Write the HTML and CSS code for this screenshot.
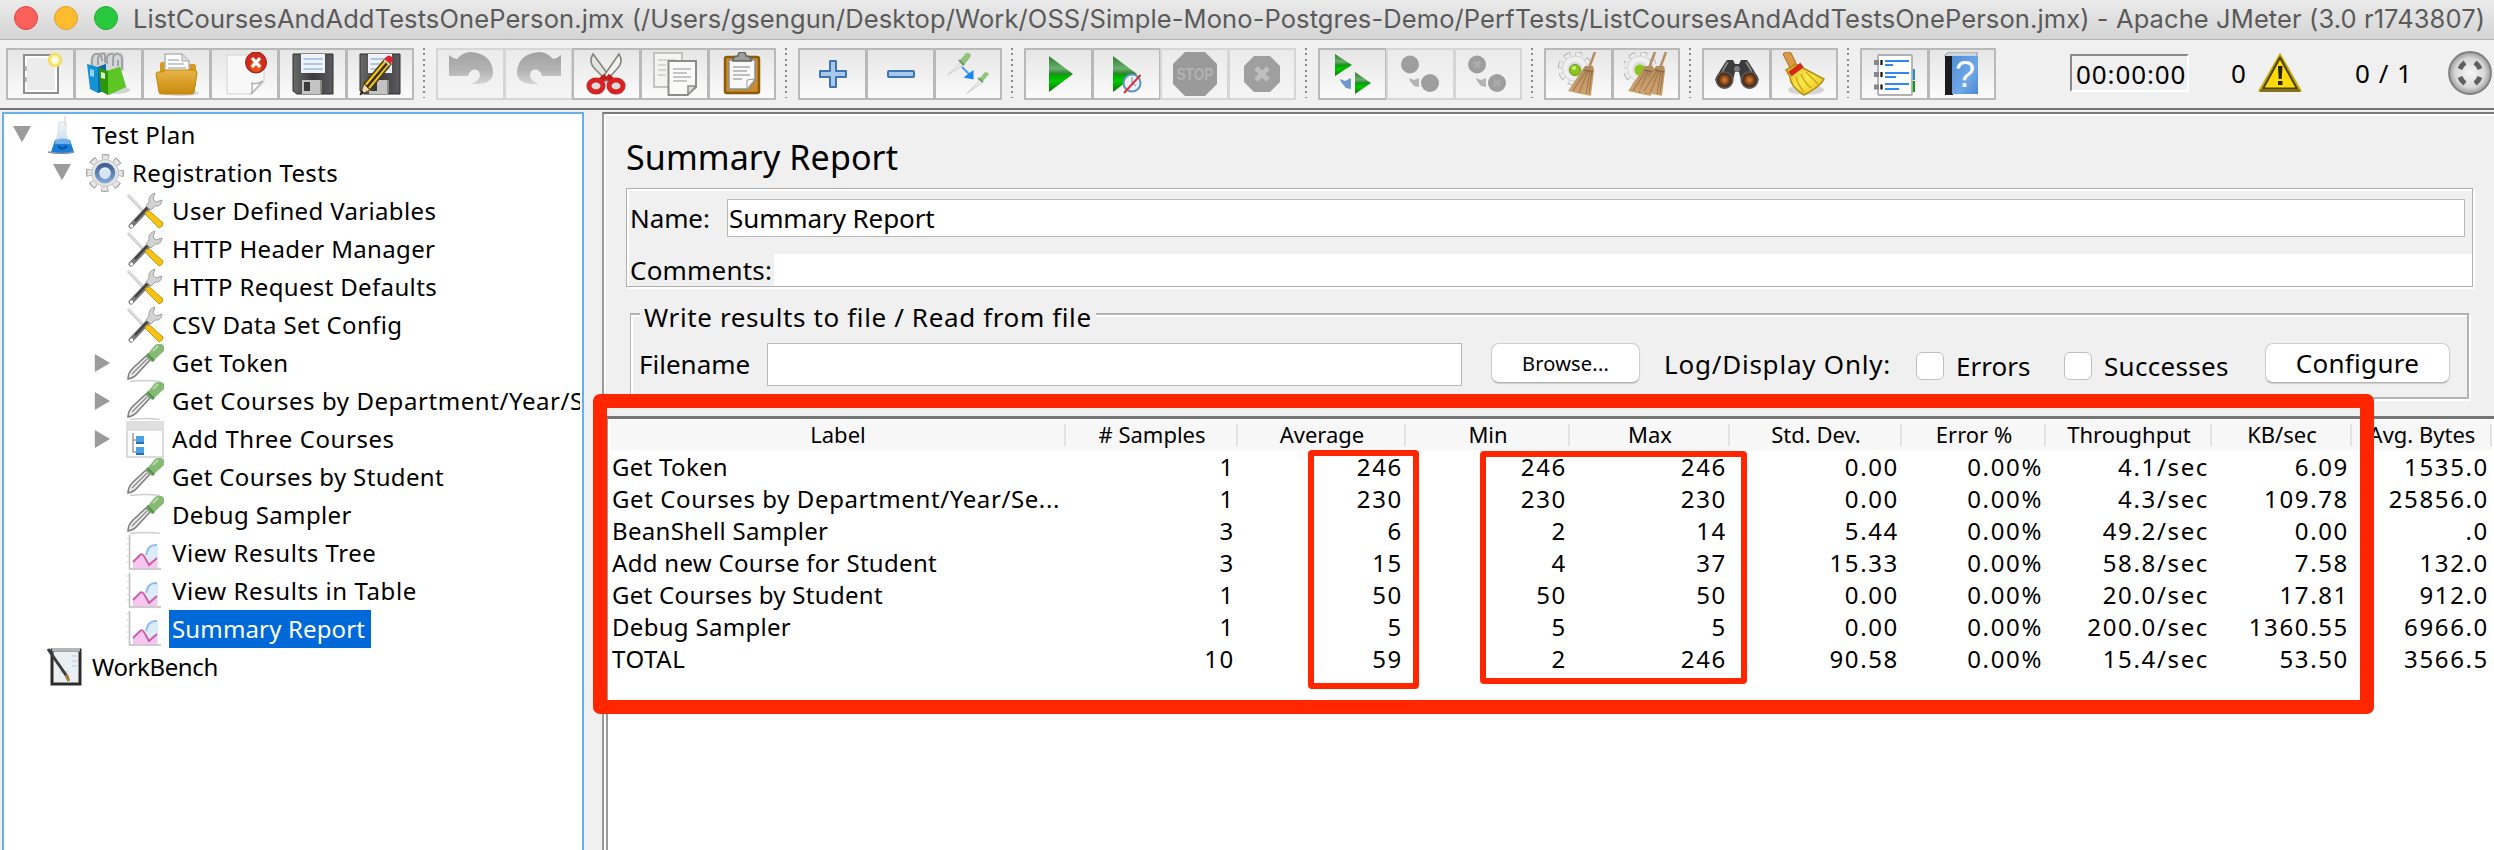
FILE: index.html
```html
<!DOCTYPE html>
<html lang="en">
<head>
<meta charset="utf-8">
<title>Apache JMeter</title>
<link rel="stylesheet" href="styles.css">
</head>
<body>
<svg class="defs" width="0" height="0">
  <defs>
    <linearGradient id="gGreen" x1="0" y1="0" x2="0" y2="1"><stop offset="0" stop-color="#2f7d32"/><stop offset=".35" stop-color="#67b06a"/><stop offset=".5" stop-color="#2f7f2f"/><stop offset=".52" stop-color="#00a800"/><stop offset=".7" stop-color="#00c800"/><stop offset="1" stop-color="#0b6b0b"/></linearGradient>
    <linearGradient id="gFolder" x1="0" y1="0" x2="0" y2="1"><stop offset="0" stop-color="#e8b548"/><stop offset="1" stop-color="#c98a0c"/></linearGradient>
    <linearGradient id="gFloppy" x1="0" y1="0" x2="1" y2="0"><stop offset="0" stop-color="#6a6a6a"/><stop offset=".5" stop-color="#3b3b3d"/><stop offset="1" stop-color="#5c5c60"/></linearGradient>
    <linearGradient id="gUndo" x1="0" y1="0" x2="0" y2="1"><stop offset="0" stop-color="#a2a2a2"/><stop offset=".6" stop-color="#b4b4b4"/><stop offset="1" stop-color="#d6d6d6"/></linearGradient>
    <linearGradient id="gHelp" x1="0" y1="0" x2="1" y2="1"><stop offset="0" stop-color="#4f8fd6"/><stop offset=".6" stop-color="#6fa8e8"/><stop offset="1" stop-color="#4d88cf"/></linearGradient>
    <linearGradient id="gYellow" x1="0" y1="0" x2="1" y2="1"><stop offset="0" stop-color="#d9b320"/><stop offset=".5" stop-color="#fbe94a"/><stop offset="1" stop-color="#e0bb14"/></linearGradient>
    <linearGradient id="gBroom" x1="0" y1="0" x2="0" y2="1"><stop offset="0" stop-color="#b58a5c"/><stop offset="1" stop-color="#d3a774"/></linearGradient>
    <radialGradient id="gBall"><stop offset="0" stop-color="#f6f6f6"/><stop offset=".7" stop-color="#d8d8d8"/><stop offset="1" stop-color="#9a9a9a"/></radialGradient>
    <radialGradient id="gLens"><stop offset="0" stop-color="#d9863a"/><stop offset=".6" stop-color="#7a3c10"/><stop offset="1" stop-color="#1b1b1b"/></radialGradient>
    <linearGradient id="gFlask" x1="0" y1="0" x2="0" y2="1"><stop offset="0" stop-color="#f4f7fa"/><stop offset=".6" stop-color="#cfdff0"/></linearGradient>
    <linearGradient id="gRing" x1="0" y1="0" x2="0" y2="1"><stop offset="0" stop-color="#3f5f93"/><stop offset="1" stop-color="#7fa3d2"/></linearGradient>
  </defs>
  <symbol id="i-new" viewBox="0 0 44 44"><rect x="5" y="3" width="34" height="38" fill="#fff" stroke="#8f8f8b" stroke-width="2"/><rect x="8" y="6" width="28" height="32" fill="#ececec"/><path d="M7 14v5M7 25v5" stroke="#bbb" stroke-width="2"/><circle cx="36" cy="8" r="6" fill="#faf3b4" stroke="#f0df63" stroke-width="2.5"/><circle cx="36" cy="8" r="2.5" fill="#fff"/></symbol>
  <symbol id="i-templates" viewBox="0 0 44 44"><ellipse cx="28" cy="38" rx="15" ry="4" fill="#000" opacity=".15"/><path d="M3 13V7Q5 0 12 0h22q3 2 3 6v13H4z" fill="#d3d5d6"/><path d="M5 14V7q1-6 6-5q4 1 4 7M11 13V6q2-6 7-4v9M20 12V6q1-5 6-4M26 14V6q1-5 5-4 4 1 4 5v11M31 14V8" fill="none" stroke="#9b9ea0" stroke-width="1.8"/><path d="M0 12l11 3 8-3v26l-8 3-8-4z" fill="#1592d4"/><path d="M11 15l8-3v26l-8 3z" fill="#0b6ba8"/><path d="M3 17l4 1v7l-4-1z" fill="#8fd3f5"/><path d="M12 16l8 3 13-4 6 20-18 8-7-4z" fill="#56bd1e"/><path d="M12 16l9 3v24l-7-4z" fill="#2c9608"/><path d="M21 19l12-4 6 20-18 8z" fill="#5cc724"/><path d="M14 20l4 1v6l-4-1z" fill="#d9f6c8"/></symbol>
  <symbol id="i-open" viewBox="0 0 44 44"><ellipse cx="26" cy="41" rx="18" ry="3" fill="#000" opacity=".15"/><path d="M5 12q0-2 2-2h5v10h22v-8h5q2 0 2 2v20H5z" fill="#d89a1c"/><path d="M10 2h17l7 7v18H10z" fill="#fdfdfd" stroke="#b5b5b5" stroke-width="1.5"/><path d="M27 2v7h7" fill="#ddd" stroke="#aaa"/><path d="M13 8h11M13 12h16M13 16h18" stroke="#b4bbc2" stroke-width="1.6"/><path d="M1 22q0-2 2-2h5l2-2h29q3 0 3 3l-3 19q0 2-3 2H7q-3 0-3-2z" fill="url(#gFolder)" stroke="#bd850f"/></symbol>
  <symbol id="i-close" viewBox="0 0 44 44"><path d="M4 3h37v27L29 42H4z" fill="#f8f8f8" stroke="#d2d2d2"/><path d="M40 29q-7 4-11 2 1 6-1 11z" fill="#fff" stroke="#b5b5b5" stroke-width="1.5"/><circle cx="33" cy="10.500" r="10.500" fill="#cf2a1c" stroke="#9c1a10"/><circle cx="33" cy="14" r="6" fill="#f0801c" opacity=".5"/><path d="M29 6l8 9M37 6l-8 9" stroke="#fff" stroke-width="3.2"/></symbol>
  <symbol id="i-save" viewBox="0 0 44 44"><path d="M2 2h40v40H6l-4-3z" fill="url(#gFloppy)" stroke="#2d2d2f"/><rect x="10" y="2" width="24" height="19" fill="#eef3fa"/><path d="M12.500 7h19M12.500 12h19M12.500 17h19" stroke="#9db9d9" stroke-width="1.6"/><rect x="11" y="28" width="19" height="14" fill="#c3c3c3"/><rect x="13" y="30" width="6" height="9" fill="#3a3a3a"/><path d="M30 28v13" stroke="#888" stroke-width="2"/></symbol>
  <symbol id="i-pencil" viewBox="0 0 44 44"><path d="M6 32L27 7l6 5L12 38z" fill="#f3c524" stroke="#4a3a08" stroke-width="1.5"/><path d="M9 35L30 10" stroke="#38300c" stroke-width="2.500"/><path d="M26 8l2-3q3-3 6 0 2 3 0 5l-3 3z" fill="#d8262d"/><path d="M26 8l6 5" stroke="#c9c9c9" stroke-width="2"/><path d="M6 32l6 6-10 5z" fill="#f0d9ac" stroke="#5b4a20"/><path d="M2 43l2-5 2 3z" fill="#222"/></symbol>
  <symbol id="i-undo" viewBox="0 0 44 44"><path d="M0 3q3 3 8 4Q14 0 22 0 43 2 44 20 44 31 30 32l-8 0q8-3 9-8 0-8-8-6-3 2-4 6H0z" fill="url(#gUndo)"/></symbol>
  <symbol id="i-cut" viewBox="0 0 44 44"><path d="M8 2q-5 8 2 15l12 12 3-4z" fill="#e4e4e0" stroke="#85857f" stroke-width="1.6"/><path d="M34 2q5 8-2 15L21 29l-3-4z" fill="#f0f0ec" stroke="#85857f" stroke-width="1.6"/><path d="M21 24l-7 6M22 24l7 6" stroke="#c41c1c" stroke-width="6"/><ellipse cx="11" cy="34" rx="7" ry="6" fill="#ddd" stroke="#d62424" stroke-width="5"/><ellipse cx="31" cy="34" rx="7" ry="6" fill="#ddd" stroke="#d62424" stroke-width="5"/></symbol>
  <symbol id="i-copy" viewBox="0 0 44 44"><rect x="1" y="1" width="28" height="34" fill="#f3f3f2" stroke="#c3c3c0" stroke-width="2"/><path d="M5 8h18M5 13h8M5 18h8M5 23h8" stroke="#d5d5d5" stroke-width="2"/><path d="M15.500 9H43v26l-9 8H15.500z" fill="#fafafa" stroke="#8c8c88" stroke-width="2"/><path d="M20 17h18M20 21h14M20 25h18M20 29h14" stroke="#c6c6c4" stroke-width="1.8"/><path d="M43 34h-8v9z" fill="#ddd" stroke="#8c8c88" stroke-width="1.500"/></symbol>
  <symbol id="i-paste" viewBox="0 0 44 44"><rect x="5" y="5" width="34" height="36" rx="2" fill="#c98b2c" stroke="#8c5a0a" stroke-width="2.500"/><path d="M9 8h26v20l-7 9H9z" fill="#f8f8f8" stroke="#8f8f8b" stroke-width="1.500"/><path d="M35 27l-8 1v9z" fill="#fff" stroke="#999"/><path d="M13 15h17M13 19h14M13 23h17M13 27h9" stroke="#bdbdbb" stroke-width="1.800"/><path d="M13 9q0-5 5-5 0-4 4-4t4 4q5 0 5 5z" fill="#9d9f9a" stroke="#62645f" stroke-width="1.500"/></symbol>
  <symbol id="i-plus" viewBox="0 0 44 44"><path d="M19 9h6v10h10v6H25v10h-6V25H9v-6h10z" fill="#a9c9ea" stroke="#3f74b3" stroke-width="2" stroke-linejoin="round"/></symbol>
  <symbol id="i-minus" viewBox="0 0 44 44"><rect x="9" y="19" width="26" height="6" fill="#a9c9ea" stroke="#3f74b3" stroke-width="2" rx="1"/></symbol>
  <symbol id="i-toggle" viewBox="0 0 44 44"><path d="M1.500 23L14 11l2.500 2.500z" fill="#ececec" stroke="#cfcfcf"/><path d="M14 8l6-7q4-1 5 3l-6 8-2 2z" fill="#93c47e"/><path d="M13 8l5 5" stroke="#6a9c60" stroke-width="2"/><path d="M20 42L34 28l2.500 2.500z" fill="#ececec" stroke="#cfcfcf"/><path d="M33 27l6-7q3 0 4 2l-6 7z" fill="#93c47e"/><path d="M32 26l5 4" stroke="#6a9c60" stroke-width="1.800"/><path d="M16 15l8 8" stroke="#4d9ff2" stroke-width="2.200"/><path d="M27.500 18v9.500l-10-2z" fill="#1d86f5"/></symbol>
  <symbol id="i-play" viewBox="0 0 44 44"><path d="M12 4l24 18-24 18z" fill="url(#gGreen)"/></symbol>
  <symbol id="i-playnt" viewBox="0 0 44 44"><path d="M8 4l24 18L8 40z" fill="url(#gGreen)"/><circle cx="27" cy="31" r="8.500" fill="#eaf1f8" stroke="#5c93c8" stroke-width="2"/><path d="M27 25v6l4 3" fill="none" stroke="#8fb0d0" stroke-width="1.500"/><path d="M35.500 23L19 41" stroke="#e03030" stroke-width="2"/></symbol>
  <symbol id="i-stop" viewBox="0 0 44 44"><path d="M12 0h20l12 12v20L32 44H12L0 32V12z" fill="#9a9a9a"/></symbol>
  <symbol id="i-shutdown" viewBox="0 0 44 44"><path d="M14 4h16l10 10v16L30 40H14L4 30V14z" fill="#9f9f9f"/><path d="M16 16l12 12M28 16L16 28" stroke="#bfbfbf" stroke-width="5"/></symbol>
  <symbol id="i-rstart" viewBox="0 0 44 44"><path d="M4 2l17 11L4 24z" fill="url(#gGreen)"/><path d="M24 20l16 11-16 11z" fill="url(#gGreen)"/><path d="M20 26v11l-5-1-5-6-1-3 5 2z" fill="#6c9acd"/></symbol>
  <symbol id="i-rstop" viewBox="0 0 44 44"><circle cx="11" cy="12.500" r="9" fill="#9e9e9e"/><circle cx="31" cy="31" r="9" fill="#9e9e9e"/><path d="M20 26v9l-5-1-4-5-1-3 5 2z" fill="#b4b4b4"/></symbol>
  <symbol id="i-rshut" viewBox="0 0 44 44"><use href="#i-rstop"/><path d="M8 9.500l6 6M14 9.500l-6 6M28 28l6 6M34 28l-6 6" stroke="#adadad" stroke-width="2.500"/></symbol>
  <symbol id="i-cog" viewBox="0 0 44 44"><circle cx="18" cy="16.500" r="14.500" fill="none" stroke="#b4b4b4" stroke-width="5.500" stroke-dasharray="6.500 4.890"/><circle cx="18" cy="16.500" r="14" fill="none" stroke="#ececec" stroke-width="4.500" stroke-dasharray="5.300 5.700" stroke-dashoffset="-.6"/><circle cx="18" cy="16.500" r="12.500" fill="#efefef" stroke="#d2d2d2"/><circle cx="18" cy="17" r="7.500" fill="#dcdcdc"/></symbol>
  <symbol id="i-brush" viewBox="0 0 44 44"><path d="M38 0l-6 16" stroke="#b58f66" stroke-width="2.600"/><path d="M28 14h8l1 4-3 26-10-2-13-3z" fill="url(#gBroom)"/><path d="M29 19L16 39M31 19l-9 22M33 19l-4 23M35 19l-3 23" stroke="#9c7444" stroke-width="1"/><path d="M27 18l9 2" stroke="#8a6a44" stroke-width="1.500"/></symbol>
  <symbol id="i-clear" viewBox="0 0 44 44"><use href="#i-cog"/><circle cx="18" cy="18" r="5.500" fill="#8cc51c" stroke="#6d9c14"/><circle cx="17" cy="16" r="2" fill="#cdf07a"/><use href="#i-brush"/></symbol>
  <symbol id="i-clearall" viewBox="0 0 44 44"><use href="#i-cog" x="-2"/><circle cx="16" cy="18" r="5.500" fill="#8cc51c"/><use href="#i-brush" x="-7"/><use href="#i-brush" x="4"/></symbol>
  <symbol id="i-find" viewBox="0 0 44 44"><path d="M12 8h6l2 4h4l2-4h6q6 8 12 20l-9 6-9-6-2-8h-4l-2 8-8 6-10-6Q6 16 12 8z" fill="#3a3c3c"/><path d="M13 10q-5 7-7 13M31 10q5 7 7 13" stroke="#85898a" stroke-width="2" fill="none"/><circle cx="9.500" cy="28" r="8" fill="url(#gLens)" stroke="#555" stroke-width="2"/><circle cx="34.500" cy="28" r="8" fill="url(#gLens)" stroke="#555" stroke-width="2"/><circle cx="22" cy="17" r="3" fill="#7b7e7e"/></symbol>
  <symbol id="i-broom" viewBox="0 0 44 44"><ellipse cx="24" cy="38" rx="18" ry="5" fill="#000" opacity=".14"/><path d="M1 2q4-4 8-1l5 10-6 5z" fill="#d99a45" stroke="#a86c1c"/><path d="M4 18l10-6 7 4 21 11q-3 7-20 16Q8 34 8 25z" fill="url(#gYellow)" stroke="#b08c10" stroke-width="1.500"/><path d="M14 25q2 8 8 15M19 22q3 8 10 14M24 20l12 12" fill="none" stroke="#c9a21a" stroke-width="1.300"/><path d="M8 22L20 13" stroke="#d3261c" stroke-width="5.500"/></symbol>
  <symbol id="i-list" viewBox="0 0 44 44"><rect x="36" y="17" width="6" height="11" fill="#2f86dc"/><rect x="36" y="29" width="6" height="11" fill="#159415"/><rect x="5" y="3" width="34" height="40" rx="1" fill="#fff" stroke="#b0b0b0" stroke-width="1.800"/><path d="M12 9h24M12 13h8M12 21h24M12 25h11M12 32h24M12 37h14" stroke="#2f8af0" stroke-width="2"/><path d="M1 10.500h5M1 22.500h5M1 35h5" stroke="#888" stroke-width="5"/><path d="M8.500 8v5M8.500 20v5M8.500 32.500v5" stroke="#111" stroke-width="2.200"/></symbol>
  <symbol id="i-help" viewBox="0 0 44 44"><path d="M5 3l4-3h28v5H5z" fill="#ccd5dc" stroke="#8d979e"/><rect x="5" y="4" width="8" height="39" fill="#1c1c1e"/><rect x="12" y="4" width="26" height="38" fill="url(#gHelp)"/></symbol>
  <symbol id="i-warn" viewBox="0 0 44 44"><path d="M22 3L43 40H1z" fill="#f6d500" stroke="#c7a600" stroke-width="1.500" stroke-linejoin="round"/><path d="M22 6.500L39 37.500H5z" fill="#fbda05" stroke="#4d430c" stroke-width="2.200" stroke-linejoin="round"/><path d="M2 39.500h40" stroke="#857016" stroke-width="3"/><path d="M20 15h4.500l-.8 13h-3z" fill="#222"/><rect x="20" y="30" width="4.500" height="4" fill="#222"/></symbol>
  <symbol id="i-ball" viewBox="0 0 44 44"><circle cx="22" cy="22" r="21" fill="url(#gBall)" stroke="#7f7f7f" stroke-width="1.800"/><path d="M12 18q1.500-4 5-6.500M27 11.500q3.500 2.500 5 6.500M32 26q-1.500 4-5 6.500M17 32.500q-3.500-2.500-5-6.500" fill="none" stroke="#5f5f5f" stroke-width="5"/></symbol>
  <symbol id="t-flask" viewBox="0 0 38 38"><path d="M13 6h7v12l7 18H6l6-18z" fill="url(#gFlask)" stroke="#d8dde2"/><path d="M19 0v10" stroke="#dedede" stroke-width="1.500"/><path d="M9 24h15l4 12q-11 3-23 0z" fill="#1c7fd6"/><path d="M9.500 24q7-3 14 0l1 4H9z" fill="#6fb0e8"/><path d="M12 30q4 5 9 0" stroke="#0d56a8" stroke-width="2.500" fill="none"/><path d="M2 36q14 3 26 0" stroke="#7f95ab" stroke-width="1.500" fill="none"/></symbol>
  <symbol id="t-gear" viewBox="0 0 38 38"><circle cx="19" cy="19" r="16" fill="none" stroke="#a2a2a2" stroke-width="6" stroke-dasharray="7 5.566" stroke-dashoffset="3.500"/><circle cx="19" cy="19" r="15.500" fill="none" stroke="#e6e6e6" stroke-width="4.600" stroke-dasharray="5.400 6.774" stroke-dashoffset="2.700"/><circle cx="19" cy="19" r="13.500" fill="#e3e3e3" stroke="#c6c6c6"/><circle cx="19" cy="19" r="8" fill="#edf4fc" stroke="url(#gRing)" stroke-width="4.500"/><circle cx="19" cy="20" r="5" fill="#d5e4f6"/></symbol>
  <symbol id="t-tools" viewBox="0 0 38 38"><path d="M2 3l16 17" stroke="#c9c9c9" stroke-width="3"/><path d="M2 2.500l16 17" stroke="#f2f2f2" stroke-width="1"/><path d="M5 34L24 14" stroke="#7a7a7a" stroke-width="5" stroke-linecap="round"/><path d="M9 29L22 15" stroke="#3e3e3e" stroke-width="2"/><circle cx="5.500" cy="34" r="1.700" fill="#fff"/><path d="M29 1q-7 2-6 9l-3 4 5 4 4-4q6 1 7-6l-6 2-3-3z" fill="#d3d3d3" stroke="#a2a2a2"/><path d="M19.500 20l4-1L37 31q0 4-4 5L20 23z" fill="#f6c514" stroke="#c9960c"/></symbol>
  <symbol id="t-dropper" viewBox="0 0 38 38"><path d="M4 37.500q16-2 30 0" stroke="#cfcfcf" fill="none" stroke-width="1.500"/><path d="M2 35q0-6 5-11L20 12l4 4L12 29Q8 34 2 35z" fill="#e8e8e8" stroke="#7c7c7c" stroke-width="1.500"/><path d="M6 30L21 15" stroke="#8d8d8d" stroke-width="1.300"/><path d="M20 12l9-11q6-3 9 1v5l-12 11z" fill="#86ba74"/><path d="M21 10l7 7" stroke="#5a954f" stroke-width="2.500"/><path d="M27 7l5-5" stroke="#b7dba8" stroke-width="2"/></symbol>
  <symbol id="t-ctrl" viewBox="0 0 38 38"><rect x="1" y="2" width="36" height="35" fill="#fff" stroke="#dcdcdc" stroke-width="2"/><rect x="0" y="1" width="38" height="10" fill="#dfdfdf"/><path d="M7 13v19h4M7 20h4" stroke="#9c9c9c" stroke-width="1.500" fill="none"/><rect x="10" y="16" width="8" height="8" fill="#4ba0e6"/><rect x="10" y="27" width="8" height="8" fill="#4ba0e6"/><path d="M10 23h8M10 34h8" stroke="#1b5f9e" stroke-width="1.500"/></symbol>
  <symbol id="t-chart" viewBox="0 0 38 38"><path d="M3.500 1v34H35" stroke="#bdbdbd" stroke-width="1.500" fill="none"/><path d="M0 4h3M0 10h3M0 16h3M0 22h3M0 28h3" stroke="#ddd"/><path d="M32 34V11q-8-1-12 9v14z" fill="#dcecfb"/><path d="M31 11q-9-1-11 10" stroke="#8cbdf0" stroke-width="2" fill="none"/><path d="M7 34V28l7-7q2-2 4 1l5 7 8-6v11z" fill="#f6c6ee"/><path d="M7 28l7-7q2-2 4 1l5 9 8-7" stroke="#cc5c9e" stroke-width="1.800" fill="none"/></symbol>
  <symbol id="t-bench" viewBox="0 0 38 38"><rect x="6" y="2" width="28" height="34" fill="#eceff2" stroke="#2c2c2c" stroke-width="3"/><path d="M6 1.500h28" stroke="#b5b5b5" stroke-width="4"/><path d="M26 8h5M26 13h5M26 18h5M14 24h8" stroke="#cddae8" stroke-width="2"/><path d="M2 1l20 29" stroke="#3c3c3c" stroke-width="3"/><path d="M20 27l3 6" stroke="#a67c35" stroke-width="3"/></symbol>
</svg>

<div class="window">
  <header class="titlebar">
    <span class="light light-red"></span><span class="light light-yellow"></span><span class="light light-green"></span>
    <h1 class="window-title">ListCoursesAndAddTestsOnePerson.jmx (/Users/gsengun/Desktop/Work/OSS/Simple-Mono-Postgres-Demo/PerfTests/ListCoursesAndAddTestsOnePerson.jmx) - Apache JMeter (3.0 r1743807)</h1>
  </header>

  <nav class="toolbar">
    <div class="group">
      <button class="tool"><svg><use href="#i-new"/></svg></button>
      <button class="tool"><svg><use href="#i-templates"/></svg></button>
      <button class="tool"><svg><use href="#i-open"/></svg></button>
      <button class="tool"><svg><use href="#i-close"/></svg></button>
      <button class="tool"><svg><use href="#i-save"/></svg></button>
      <button class="tool"><svg><use href="#i-save"/><use href="#i-pencil"/></svg></button>
    </div>
    <span class="sep"></span>
    <div class="group">
      <button class="tool off"><svg><use href="#i-undo"/></svg></button>
      <button class="tool off"><svg class="mirror"><use href="#i-undo"/></svg></button>
      <button class="tool"><svg><use href="#i-cut"/></svg></button>
      <button class="tool"><svg><use href="#i-copy"/></svg></button>
      <button class="tool"><svg><use href="#i-paste"/></svg></button>
    </div>
    <span class="sep"></span>
    <div class="group">
      <button class="tool"><svg><use href="#i-plus"/></svg></button>
      <button class="tool"><svg><use href="#i-minus"/></svg></button>
      <button class="tool"><svg><use href="#i-toggle"/></svg></button>
    </div>
    <span class="sep"></span>
    <div class="group">
      <button class="tool"><svg><use href="#i-play"/></svg></button>
      <button class="tool"><svg><use href="#i-playnt"/></svg></button>
      <button class="tool off"><svg viewBox="0 0 44 44"><use href="#i-stop"/><text class="stop-text" x="3.500" y="28" textLength="37" lengthAdjust="spacingAndGlyphs">STOP</text></svg></button>
      <button class="tool off"><svg><use href="#i-shutdown"/></svg></button>
    </div>
    <span class="sep"></span>
    <div class="group">
      <button class="tool"><svg><use href="#i-rstart"/></svg></button>
      <button class="tool off"><svg><use href="#i-rstop"/></svg></button>
      <button class="tool off"><svg><use href="#i-rshut"/></svg></button>
    </div>
    <span class="sep"></span>
    <div class="group">
      <button class="tool"><svg><use href="#i-clear"/></svg></button>
      <button class="tool"><svg><use href="#i-clearall"/></svg></button>
    </div>
    <span class="sep"></span>
    <div class="group">
      <button class="tool"><svg><use href="#i-find"/></svg></button>
      <button class="tool"><svg><use href="#i-broom"/></svg></button>
    </div>
    <span class="sep"></span>
    <div class="group">
      <button class="tool"><svg><use href="#i-list"/></svg></button>
      <button class="tool"><svg viewBox="0 0 44 44"><use href="#i-help"/><text class="help-text" x="25" y="35" text-anchor="middle">?</text></svg></button>
    </div>
    <div class="status">
      <span class="timer">00:00:00</span>
      <span class="errors">0</span>
      <svg class="status-icon"><use href="#i-warn"/></svg>
      <span class="threads">0 / 1</span>
      <svg class="status-icon"><use href="#i-ball"/></svg>
    </div>
  </nav>

  <main class="main">
    <ul class="tree">
      <li class="node d0"><i class="arrow open"></i><svg><use href="#t-flask"/></svg><span>Test Plan</span></li>
      <li class="node d1"><i class="arrow open"></i><svg><use href="#t-gear"/></svg><span>Registration Tests</span></li>
      <li class="node d2"><i class="arrow"></i><svg><use href="#t-tools"/></svg><span>User Defined Variables</span></li>
      <li class="node d2"><i class="arrow"></i><svg><use href="#t-tools"/></svg><span>HTTP Header Manager</span></li>
      <li class="node d2"><i class="arrow"></i><svg><use href="#t-tools"/></svg><span>HTTP Request Defaults</span></li>
      <li class="node d2"><i class="arrow"></i><svg><use href="#t-tools"/></svg><span>CSV Data Set Config</span></li>
      <li class="node d2"><i class="arrow shut"></i><svg><use href="#t-dropper"/></svg><span>Get Token</span></li>
      <li class="node d2"><i class="arrow shut"></i><svg><use href="#t-dropper"/></svg><span class="long">Get Courses by Department/Year/S</span></li>
      <li class="node d2"><i class="arrow shut"></i><svg><use href="#t-ctrl"/></svg><span class="long">Add Three Courses</span></li>
      <li class="node d2"><i class="arrow"></i><svg><use href="#t-dropper"/></svg><span>Get Courses by Student</span></li>
      <li class="node d2"><i class="arrow"></i><svg><use href="#t-dropper"/></svg><span>Debug Sampler</span></li>
      <li class="node d2"><i class="arrow"></i><svg><use href="#t-chart"/></svg><span class="long">View Results Tree</span></li>
      <li class="node d2"><i class="arrow"></i><svg><use href="#t-chart"/></svg><span class="long">View Results in Table</span></li>
      <li class="node d2"><i class="arrow"></i><svg><use href="#t-chart"/></svg><span class="selected">Summary Report</span></li>
      <li class="node d0"><i class="arrow"></i><svg><use href="#t-bench"/></svg><span class="tight">WorkBench</span></li>
    </ul>

    <section class="panel">
      <h2 class="panel-title">Summary Report</h2>
      <div class="ident">
        <div class="row-name"><label>Name:</label><div class="field">Summary Report</div></div>
        <div class="row-comments"><label>Comments:</label><div class="field-flat"></div></div>
      </div>
      <div class="file-box">
        <span class="legend">Write results to file / Read from file</span>
        <div class="file-row">
          <label class="filename">Filename</label>
          <div class="file-input"></div>
          <button class="btn browse">Browse...</button>
          <span class="log-only">Log/Display Only:</span>
          <i class="check"></i><span class="check-label errors-label">Errors</span>
          <i class="check"></i><span class="check-label success-label">Successes</span>
          <button class="btn configure">Configure</button>
        </div>
      </div>
      <div class="table-wrap">
        <table class="report">
          <colgroup><col class="c-label"><col class="c-samples"><col class="c-avg"><col class="c-min"><col class="c-max"><col class="c-dev"><col class="c-err"><col class="c-thr"><col class="c-kb"><col class="c-bytes"></colgroup>
          <thead><tr><th>Label</th><th># Samples</th><th>Average</th><th>Min</th><th>Max</th><th>Std. Dev.</th><th>Error %</th><th>Throughput</th><th>KB/sec</th><th>Avg. Bytes</th></tr></thead>
          <tbody>
            <tr><td>Get Token</td><td>1</td><td>246</td><td>246</td><td>246</td><td>0.00</td><td>0.00%</td><td>4.1/sec</td><td>6.09</td><td>1535.0</td></tr>
            <tr><td class="wide">Get Courses by Department/Year/Se...</td><td>1</td><td>230</td><td>230</td><td>230</td><td>0.00</td><td>0.00%</td><td>4.3/sec</td><td>109.78</td><td>25856.0</td></tr>
            <tr><td>BeanShell Sampler</td><td>3</td><td>6</td><td>2</td><td>14</td><td>5.44</td><td>0.00%</td><td>49.2/sec</td><td>0.00</td><td>.0</td></tr>
            <tr><td>Add new Course for Student</td><td>3</td><td>15</td><td>4</td><td>37</td><td>15.33</td><td>0.00%</td><td>58.8/sec</td><td>7.58</td><td>132.0</td></tr>
            <tr><td>Get Courses by Student</td><td>1</td><td>50</td><td>50</td><td>50</td><td>0.00</td><td>0.00%</td><td>20.0/sec</td><td>17.81</td><td>912.0</td></tr>
            <tr><td>Debug Sampler</td><td>1</td><td>5</td><td>5</td><td>5</td><td>0.00</td><td>0.00%</td><td>200.0/sec</td><td>1360.55</td><td>6966.0</td></tr>
            <tr><td class="wide">TOTAL</td><td>10</td><td>59</td><td>2</td><td>246</td><td>90.58</td><td>0.00%</td><td>15.4/sec</td><td>53.50</td><td>3566.5</td></tr>
          </tbody>
        </table>
      </div>
    </section>
  </main>
  <div class="mark mark-table"></div>
  <div class="mark mark-average"></div>
  <div class="mark mark-minmax"></div>
</div>
</body>
</html>
```
FILE: styles.css
```css
* { box-sizing: border-box; margin: 0; padding: 0; }
body { background: #f0f0f0; color: #000; font-family: "Noto Sans", "Open Sans", sans-serif; font-size: 24px; overflow: hidden; }
.defs { position: absolute; }
.window { position: relative; width: 2494px; height: 850px; display: flex; flex-direction: column; overflow: hidden; }

.titlebar { height: 40px; display: flex; align-items: center; padding: 0 0 3px 14px; gap: 16px; background: linear-gradient(#ebebeb, #d4d4d4); border-bottom: 1px solid #b4b4b4; }
.light { width: 24px; height: 24px; border-radius: 50%; flex: none; border: 1px solid; }
.light-red { background: #fc605b; border-color: #df4744; }
.light-yellow { background: #fdbc2f; border-color: #de9f34; }
.light-green { background: #28c93f; border-color: #27aa35; }
.window-title { font: 400 25.5px/36px Inter, sans-serif; letter-spacing: .1px; color: #5a5a5a; white-space: nowrap; margin-left: -1px; padding-top: 2px; }

.toolbar { height: 70px; display: flex; align-items: flex-start; padding: 8px 0 0 6px; border-bottom: 2px solid #757575; }
.group { display: flex; }
.tool { width: 68px; height: 52px; display: flex; align-items: center; justify-content: center; border: 2px solid #b9b9b9; border-right-width: 1px; background: linear-gradient(#e6e6e6, #fbfbfb); }
.tool:last-child { border-right-width: 2px; }
.tool svg { width: 44px; height: 44px; flex: none; }
.tool.off { border-color: #d6d6d6; background: linear-gradient(#ebebeb, #f5f5f5); }
.mirror { transform: scaleX(-1); }
.stop-text { font: bold 16.5px "Liberation Sans", sans-serif; fill: #b2b2b2; }
.help-text { font: 36px "Liberation Sans", sans-serif; fill: #fff; }
.sep { width: 22px; height: 52px; background: repeating-linear-gradient(#8a8a8a 0 2px, transparent 2px 5.4px) 9px 0 / 2px 50px no-repeat; }
.status { display: flex; align-items: center; height: 50px; padding-left: 74px; font-size: 26px; }
.timer { width: 119px; height: 38px; line-height: 36px; padding-left: 4px; letter-spacing: .9px; border: 2px solid #fff; border-top-color: #8a8a8a; border-left-color: #8a8a8a; }
.status-icon { width: 44px; height: 44px; flex: none; }
.errors { width: 69px; padding-left: 42px; }
.threads { width: 146px; padding-left: 53px; letter-spacing: 1px; white-space: nowrap; }

.main { flex: 1; display: flex; gap: 18px; padding: 2px 0 0 2px; min-height: 0; }
.tree { width: 582px; flex: none; list-style: none; background: #fff; border: 2px solid #6ab0e8; border-bottom: 0; padding: 2px 2px 0 0; overflow: hidden; }
.node { display: flex; align-items: center; height: 38px; white-space: nowrap; overflow: hidden; line-height: 38px; letter-spacing: .35px; }
.node svg { width: 38px; height: 38px; flex: none; }
.node span { margin-left: 5px; padding: 0 3px; height: 38px; }
.node .long { letter-spacing: .57px; }
.node .tight { letter-spacing: -.4px; }
.node .selected { background: #0069d9; color: #fff; letter-spacing: .15px; padding-right: 6px; }
.d0 { padding-left: 9px; }
.d1 { padding-left: 49px; }
.d2 { padding-left: 89px; }
.arrow { width: 18px; height: 18px; flex: none; margin-right: 15px; }
.arrow.open { background: #9b9b9b; clip-path: polygon(0 0, 100% 0, 50% 90%); }
.arrow.shut { background: #9b9b9b; clip-path: polygon(10% 0, 95% 50%, 10% 100%); }

.panel { flex: 1; display: flex; flex-direction: column; min-width: 0; border-top: 2px solid #7a7a7a; border-left: 2px solid #9a9a9a; box-shadow: inset 2px 2px #fff; padding-left: 2px; }
.panel-title { font-weight: 400; font-size: 34px; line-height: 46px; padding: 20px 0 0 20px; height: 74px; letter-spacing: .1px; }
.ident { height: 99px; width: 1847px; margin-left: 20px; border: 1px solid #b0b0b0; box-shadow: inset 2px 2px #fff, 2px 2px #fff; padding: 10px 0 0 3px; font-size: 26px; letter-spacing: -.1px; display: flex; flex-direction: column; }
.row-name { display: flex; align-items: center; height: 38px; }
.row-name label { width: 97px; }
.field { width: 1738px; height: 38px; border: 1px solid #b9b9b9; background: #fff; line-height: 36px; padding-left: 1px; }
.row-comments { display: flex; margin-top: 17px; height: 32px; line-height: 32px; }
.row-comments label { width: 144px; letter-spacing: .2px; }
.field-flat { flex: 1; background: #fff; }

.file-box { width: 1839px; height: 99px; margin: 13px 0 0 24px; font-size: 26px; position: relative; z-index: 0; }
.file-box::before { content: ""; position: absolute; z-index: -1; inset: 13px 0 0 0; border: 2px solid #b3b3b3; border-left-width: 1px; box-shadow: inset 2px 2px #fff, 2px 2px #fff; }
.legend { display: block; width: max-content; margin-left: 10px; padding: 0 4px; height: 34px; line-height: 34px; letter-spacing: .62px; background: #f0f0f0; white-space: nowrap; }
.file-row { display: flex; align-items: flex-start; padding: 9px 0 0 9px; line-height: 43px; white-space: nowrap; }
.filename { width: 128px; }
.file-input { width: 695px; height: 43px; border: 1px solid #b9b9b9; background: #fff; }
.btn { border: 1px solid #cfcfcf; border-bottom-color: #b3b3b3; border-radius: 8px; background: #fff; box-shadow: 0 1px 1px rgba(0, 0, 0, .15); height: 40px; font-family: inherit; color: #000; }
.browse { width: 149px; margin-left: 29px; font-size: 20px; letter-spacing: .2px; }
.log-only { margin-left: 24px; width: 252px; letter-spacing: .78px; }
.check { width: 28px; height: 28px; margin-top: 9px; border: 1px solid #c0c0c0; border-radius: 6px; background: #fff; flex: none; }
.check-label { margin-left: 12px; padding-top: 2px; }
.errors-label { width: 108px; }
.success-label { width: 161px; letter-spacing: .3px; }
.configure { width: 185px; font-size: 26px; letter-spacing: .3px; }

.table-wrap { flex: 1; margin-top: 17px; border-top: 3px solid #757575; border-left: 2px solid #9a9a9a; background: #fff; padding: 1px 0 0 2px; overflow: hidden; }
.report { width: 1882px; table-layout: fixed; border-collapse: collapse; }
.c-label { width: 456px; }
.c-samples { width: 172px; }
.c-avg { width: 168px; }
.c-min { width: 164px; }
.c-max { width: 160px; }
.c-dev { width: 172px; }
.c-err { width: 144px; }
.c-thr { width: 166px; }
.c-kb { width: 140px; }
.c-bytes { width: 140px; }
.report th { height: 30px; font-size: 22px; font-weight: 400; line-height: 26px; padding-bottom: 3px; white-space: nowrap; background: linear-gradient(#e2e2e2, #e2e2e2) right 4px / 2px 22px no-repeat #f7f7f7; }
.report td { height: 32px; line-height: 32px; text-align: right; white-space: nowrap; padding-right: 3px; letter-spacing: 1.65px; }
.report td:first-child { text-align: left; padding: 0 0 0 2px; letter-spacing: .3px; }
.report td.wide:first-child { letter-spacing: .6px; }
.report tbody::before { content: ""; display: block; height: 1px; }

.mark { position: absolute; border: 6px solid #ff2600; border-radius: 4px; }
.mark-table { left: 593px; top: 394px; width: 1781px; height: 320px; border-width: 14px; border-radius: 7px; }
.mark-average { left: 1308px; top: 450px; width: 111px; height: 239px; }
.mark-minmax { left: 1480px; top: 451px; width: 267px; height: 233px; }
```
